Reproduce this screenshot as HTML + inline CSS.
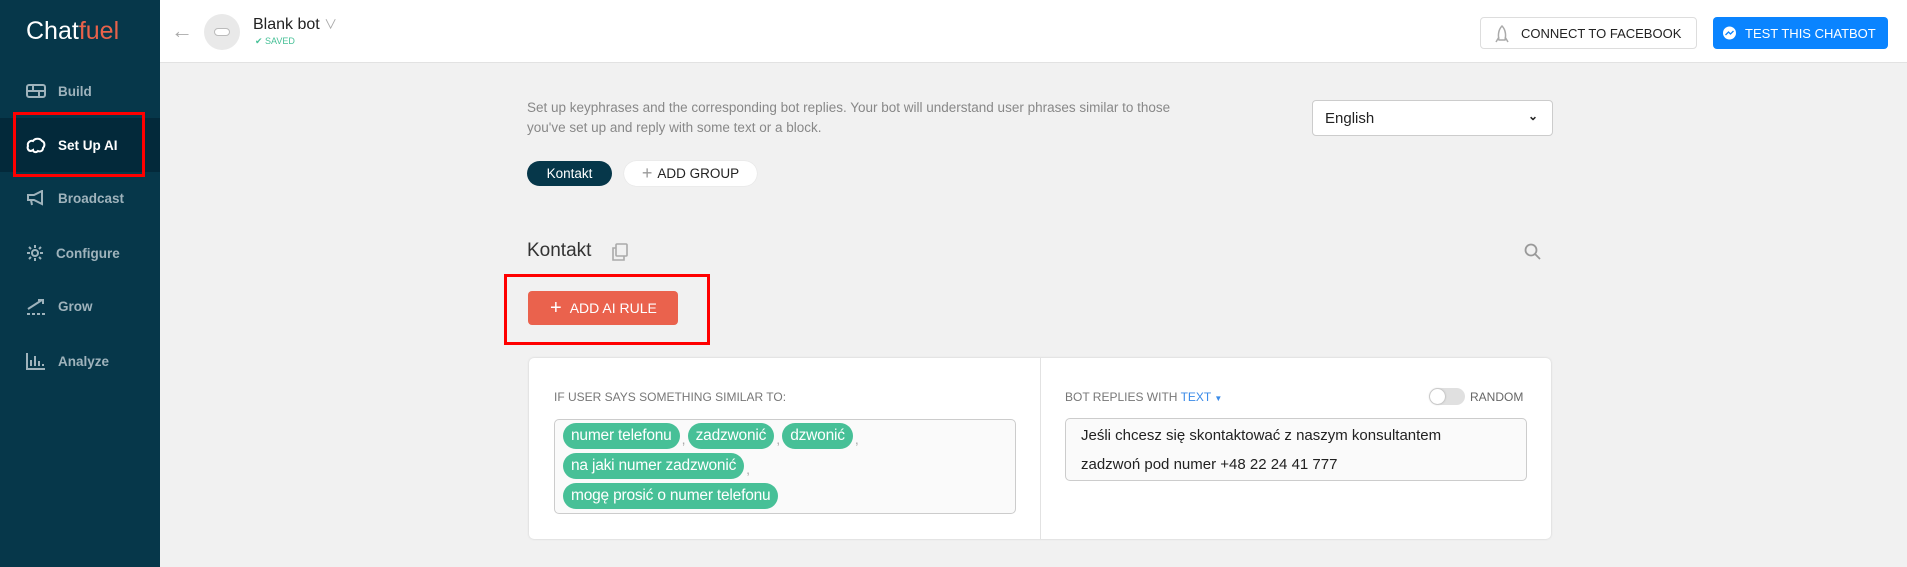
<!DOCTYPE html>
<html><head><meta charset="utf-8">
<style>
*{box-sizing:border-box;margin:0;padding:0}
body{width:1907px;height:567px;overflow:hidden;background:#f1f1f1;font-family:"Liberation Sans","Noto Sans CJK JP",sans-serif;position:relative}
.abs{position:absolute}
#side{left:0;top:0;width:160px;height:567px;background:#06374a}
.nav{left:0;width:160px;height:54px;color:#9fb3bc;font-weight:bold;font-size:13.5px;display:flex;align-items:center;padding-left:26px}
.nav svg{margin-right:12px}
#hdr{left:160px;top:0;width:1747px;height:63px;background:#fff;border-bottom:1px solid #e2e2e2}
.pill{border-radius:13px;height:25px;display:flex;align-items:center;justify-content:center;font-size:13.5px}
.row{position:absolute;left:8px;height:26px;display:flex;align-items:flex-end;white-space:nowrap}
.tag{height:26px;background:#47c097;color:#fff;border-radius:13px;font-size:15.5px;line-height:26px;padding:0 8px;letter-spacing:-0.2px}
.c{color:#aaa;font-size:14px;width:8px;text-align:center;line-height:20px}
</style></head><body>
<div id="side" class="abs">
  <div class="abs" style="left:26px;top:17px;font-size:25px;color:#fff;font-weight:300">Chat<span style="color:#e8624a">fuel</span></div>
  <div class="abs nav" style="top:64px"><svg width="20" height="16" viewBox="0 0 20 16" fill="none" stroke="#9fb3bc" stroke-width="2"><rect x="1" y="2" width="18" height="12" rx="2"/><path d="M1 8h18M7 2v6M13 8v6"/></svg>Build</div>
  <div class="abs nav" style="top:118px;background:#03293a;color:#fff"><svg width="20" height="18" viewBox="0 0 20 18" fill="none" stroke="#fff" stroke-width="2"><path d="M5 15c-3 0-4-3-3-5-1-3 2-6 5-5 2-3 7-3 9 0 3 1 3 5 1 7 0 3-3 4-5 3-2 2-5 1-5-1z"/></svg>Set Up AI</div>
  <div class="abs" style="left:13px;top:112px;width:132px;height:65px;border:3px solid #f00"></div>
  <div class="abs nav" style="top:171px"><svg width="20" height="16" viewBox="0 0 20 16" fill="none" stroke="#9fb3bc" stroke-width="2"><path d="M2 5h6l8-4v13l-8-4H2zM5 10l1 5"/></svg>Broadcast</div>
  <div class="abs nav" style="top:226px"><svg width="18" height="18" viewBox="0 0 18 18" fill="none" stroke="#9fb3bc" stroke-width="2"><circle cx="9" cy="9" r="3"/><path d="M9 1v3M9 14v3M1 9h3M14 9h3M3 3l2 2M13 13l2 2M3 15l2-2M13 5l2-2"/></svg>Configure</div>
  <div class="abs nav" style="top:279px"><svg width="20" height="18" viewBox="0 0 20 18" fill="none" stroke="#9fb3bc" stroke-width="2"><path d="M2 12l14-9M12 3h5v4"/><path d="M1 17h18" stroke-dasharray="3 2"/></svg>Grow</div>
  <div class="abs nav" style="top:334px"><svg width="20" height="18" viewBox="0 0 20 18" fill="none" stroke="#9fb3bc" stroke-width="2"><path d="M1 1v16h18M5 14V8M9 14V4M13 14V9M17 14v-2"/></svg>Analyze</div>
</div>
<div id="hdr" class="abs">
  <div class="abs" style="left:11px;top:18px;color:#aaa;font-size:22px">←</div>
  <div class="abs" style="left:44px;top:14px;width:36px;height:36px;border-radius:50%;background:#e9e9e9"><div class="abs" style="left:10px;top:14px;width:16px;height:8px;border-radius:4px;background:#fff;border:1px solid #bbb"></div></div>
  <div class="abs" style="left:93px;top:14px;font-size:16px;color:#222">Blank bot <span style="color:#aaa;font-size:13px">&#8744;</span></div>
  <div class="abs" style="left:95px;top:36px;font-size:9px;color:#47c097">✔ SAVED</div>
  <div class="abs" style="left:1320px;top:17px;width:217px;height:32px;border:1px solid #ddd;border-radius:4px;font-size:13px;color:#222;display:flex;align-items:center;padding-left:40px">CONNECT TO FACEBOOK<svg class="abs" style="left:14px;top:7px" width="14" height="18" viewBox="0 0 14 18" fill="none" stroke="#aaa" stroke-width="1.5"><path d="M7 1C3 5 3 11 4 15h6c1-4 1-10-3-14zM4 12l-3 5M10 12l3 5"/></svg></div>
  <div class="abs" style="left:1553px;top:17px;width:175px;height:32px;background:#0a84ff;border-radius:4px;font-size:13px;color:#fff;display:flex;align-items:center;padding-left:32px">TEST THIS CHATBOT<svg class="abs" style="left:9px;top:9px" width="15" height="15" viewBox="0 0 15 15"><circle cx="7.5" cy="7" r="6.5" fill="#fff"/><path d="M3.5 9l3-3 2 2 3-3-3 3-2-2z" stroke="#0a84ff" stroke-width="1.3" fill="none"/></svg></div>
</div>
<div class="abs" style="left:527px;top:98px;width:720px;font-size:13.5px;line-height:20px;color:#888">Set up keyphrases and the corresponding bot replies. Your bot will understand user phrases similar to those<br>you've set up and reply with some text or a block.</div>
<div class="abs" style="left:1312px;top:100px;width:241px;height:36px;background:#fff;border:1px solid #ccc;border-radius:4px;font-size:15px;color:#222;padding:9px 12px">English<span class="abs" style="right:14px;top:8px;font-weight:bold;font-size:12px">&#8964;</span></div>
<div class="abs pill" style="left:527px;top:161px;width:85px;background:#06374a;color:#fff">Kontakt</div>
<div class="abs pill" style="left:624px;top:161px;width:133px;background:#fff;color:#222;box-shadow:0 0 1px #ccc"><span style="color:#999;font-size:18px;margin-right:5px">+</span>ADD GROUP</div>
<div class="abs" style="left:527px;top:240px;font-size:19px;color:#333;font-weight:300">Kontakt</div>
<svg class="abs" style="left:612px;top:243px" width="16" height="18" viewBox="0 0 16 18" fill="none" stroke="#aaa" stroke-width="1.6"><rect x="4" y="1" width="11" height="12" rx="1"/><path d="M4 5H1v12h11v-4"/></svg>
<svg class="abs" style="left:1524px;top:243px" width="17" height="17" viewBox="0 0 17 17" fill="none" stroke="#999" stroke-width="1.8"><circle cx="7" cy="7" r="5.5"/><path d="M11 11l5 5"/></svg>
<div class="abs" style="left:528px;top:291px;width:150px;height:34px;background:#ea624d;border-radius:4px;color:#fff;font-size:14px;display:flex;align-items:center;padding-left:22px"><span style="font-size:20px;margin-right:8px">+</span>ADD AI RULE</div>
<div class="abs" style="left:504px;top:274px;width:206px;height:71px;border:3px solid #f00"></div>
<div class="abs" style="left:529px;top:358px;width:1022px;height:181px;background:#fff;border-radius:5px;box-shadow:0 0 2px #ccc">
  <div class="abs" style="left:511px;top:0;width:1px;height:181px;background:#e2e2e2"></div>
  <div class="abs" style="left:25px;top:32px;font-size:12px;color:#777">IF USER SAYS SOMETHING SIMILAR TO:</div>
  <div class="abs" style="left:25px;top:61px;width:462px;height:95px;border:1px solid #ccc;border-radius:5px;background:#fafafa">
    <div class="row" style="top:3px"><span class="tag">numer telefonu</span><span class="c">,</span><span class="tag">zadzwonić</span><span class="c">,</span><span class="tag">dzwonić</span><span class="c">,</span></div>
    <div class="row" style="top:33px"><span class="tag">na jaki numer zadzwonić</span><span class="c">,</span></div>
    <div class="row" style="top:63px"><span class="tag">mogę prosić o numer telefonu</span></div>
  </div>
  <div class="abs" style="left:536px;top:32px;font-size:12px;color:#777">BOT REPLIES WITH <span style="color:#3b8be8">TEXT</span> <span style="color:#3b8be8;font-size:8px">▼</span></div>
  <div class="abs" style="left:900px;top:30px;width:36px;height:17px;border-radius:9px;background:#e0e0e0"><div class="abs" style="left:1px;top:1px;width:15px;height:15px;border-radius:50%;background:#fff;box-shadow:0 0 2px #999"></div></div>
  <div class="abs" style="left:941px;top:32px;font-size:12px;color:#666">RANDOM</div>
  <div class="abs" style="left:536px;top:60px;width:462px;height:63px;border:1px solid #ccc;border-radius:5px;background:#fafafa;font-size:15px;line-height:29px;color:#222;padding:2px 15px">Jeśli chcesz się skontaktować z naszym konsultantem<br>zadzwoń pod numer +48 22 24 41 777</div>
</div>
</body></html>
